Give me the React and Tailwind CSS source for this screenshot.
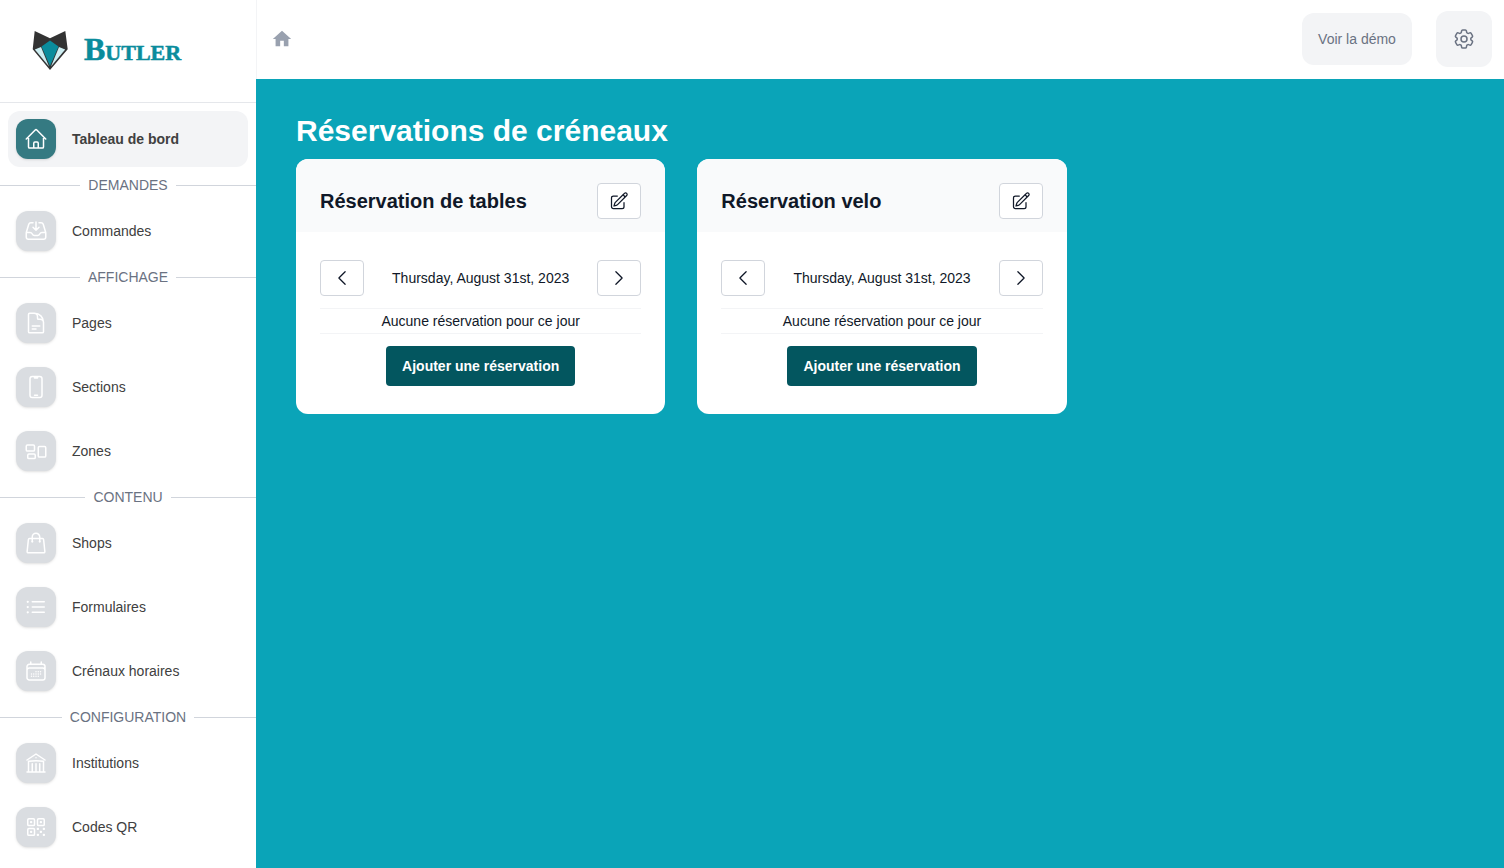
import { MdHome } from "react-icons/md";
import {
  HiOutlineHome,
  HiOutlineInboxArrowDown,
  HiOutlineDocumentText,
  HiOutlineDevicePhoneMobile,
  HiOutlineRectangleGroup,
  HiOutlineShoppingBag,
  HiOutlineListBullet,
  HiOutlineCalendarDays,
  HiOutlineBuildingLibrary,
  HiOutlineQrCode,
  HiOutlinePencilSquare,
  HiOutlineChevronLeft,
  HiOutlineChevronRight,
  HiOutlineCog6Tooth,
} from "react-icons/hi2";

const sections = [
  { label: "DEMANDES", items: [{ name: "Commandes", icon: HiOutlineInboxArrowDown }] },
  {
    label: "AFFICHAGE",
    items: [
      { name: "Pages", icon: HiOutlineDocumentText },
      { name: "Sections", icon: HiOutlineDevicePhoneMobile },
      { name: "Zones", icon: HiOutlineRectangleGroup },
    ],
  },
  {
    label: "CONTENU",
    items: [
      { name: "Shops", icon: HiOutlineShoppingBag },
      { name: "Formulaires", icon: HiOutlineListBullet },
      { name: "Crénaux horaires", icon: HiOutlineCalendarDays },
    ],
  },
  {
    label: "CONFIGURATION",
    items: [
      { name: "Institutions", icon: HiOutlineBuildingLibrary },
      { name: "Codes QR", icon: HiOutlineQrCode },
    ],
  },
];

const cards = ["Réservation de tables", "Réservation velo"];

function FoxLogo() {
  return (
    <svg width="42" height="44" viewBox="30 29 42 44">
      <path d="M34.7 31 L50 38.3 L65.3 31 L67.7 49.3 L50 70 L32.7 49.3 Z" fill="#333333" />
      <path d="M50 40.5 L58.5 46.5 L50 66 L41.5 46.5 Z" fill="#0a8c9c" />
      <path d="M34.8 49.6 L41 47 L49 66.5 Z" fill="#cdeef2" />
      <path d="M65.2 49.6 L59 47 L51 66.5 Z" fill="#cdeef2" />
    </svg>
  );
}

function SectionLabel({ label }) {
  return (
    <div className="flex h-9 items-center">
      <div className="h-px flex-1 bg-gray-300" />
      <span className="mx-2 text-sm text-gray-500">{label}</span>
      <div className="h-px flex-1 bg-gray-300" />
    </div>
  );
}

function NavItem({ name, icon: Icon }) {
  return (
    <div className="flex h-14 items-center gap-4 px-2">
      <div className="flex h-10 w-10 items-center justify-center rounded-xl bg-[#dadde1] text-white shadow-sm">
        <Icon className="h-6 w-6" />
      </div>
      <span className="text-sm text-neutral-700">{name}</span>
    </div>
  );
}

function ReservationCard({ title }) {
  return (
    <div className="w-[369.33px] overflow-hidden rounded-xl bg-white">
      <div className="flex items-center justify-between bg-gray-50 px-6 pt-6 pb-[13px]">
        <h2 className="text-xl font-bold text-gray-900">{title}</h2>
        <button className="flex h-9 w-11 items-center justify-center rounded border border-gray-300 bg-white text-gray-900">
          <HiOutlinePencilSquare className="h-5 w-5" />
        </button>
      </div>
      <div className="px-6 pt-7 pb-7">
        <div className="flex items-center justify-between">
          <button className="flex h-9 w-11 items-center justify-center rounded border border-gray-300 bg-white text-gray-900">
            <HiOutlineChevronLeft className="h-5 w-5" />
          </button>
          <span className="text-sm text-gray-900">Thursday, August 31st, 2023</span>
          <button className="flex h-9 w-11 items-center justify-center rounded border border-gray-300 bg-white text-gray-900">
            <HiOutlineChevronRight className="h-5 w-5" />
          </button>
        </div>
        <div className="mt-3 flex h-[26px] items-center justify-center border-y border-gray-100 text-sm text-gray-900">
          Aucune réservation pour ce jour
        </div>
        <div className="mt-3 flex justify-center">
          <button className="h-10 rounded bg-[#03565f] px-4 text-sm font-bold text-white">
            Ajouter une réservation
          </button>
        </div>
      </div>
    </div>
  );
}

export default function App() {
  return (
    <div className="flex h-screen overflow-hidden bg-white font-['Liberation_Sans',sans-serif]">
      <aside className="w-64 shrink-0">
        <div className="flex h-[103px] items-center gap-3 border-b border-gray-200 pl-[30px]">
          <FoxLogo />
          <span className="-mt-1 font-['Liberation_Serif',serif] text-[32px] font-bold text-[#0a8c9c] [-webkit-text-stroke:0.5px_#0a8c9c] [font-variant:small-caps]">
            Butler
          </span>
        </div>
        <div className="mx-2 mt-2 flex h-14 items-center gap-4 rounded-xl bg-gray-100 px-2">
          <div className="flex h-10 w-10 items-center justify-center rounded-xl bg-[#357a82] text-white shadow-sm">
            <HiOutlineHome className="h-6 w-6" />
          </div>
          <span className="text-sm font-bold text-neutral-700">Tableau de bord</span>
        </div>
        {sections.map((section) => (
          <div key={section.label}>
            <SectionLabel label={section.label} />
            <div className="flex flex-col gap-2 px-2">
              {section.items.map((item) => (
                <NavItem key={item.name} name={item.name} icon={item.icon} />
              ))}
            </div>
          </div>
        ))}
      </aside>

      <div className="flex min-w-0 flex-1 flex-col">
        <header className="flex h-[79px] items-center justify-between border-l border-gray-100 bg-white pr-3 pb-[2px] pl-[14px]">
          <MdHome className="mt-[1px] h-[22px] w-[22px] text-gray-400" />
          <div className="flex items-center gap-6">
            <button className="h-[52px] w-[110px] rounded-xl bg-gray-100 text-sm text-gray-500">
              Voir la démo
            </button>
            <button className="flex h-14 w-14 items-center justify-center rounded-xl bg-gray-100 text-gray-500">
              <HiOutlineCog6Tooth className="h-6 w-6" />
            </button>
          </div>
        </header>
        <main className="flex-1 bg-[#0aa4b8] px-10 pt-[34px]">
          <h1 className="text-3xl font-bold leading-9 text-white">Réservations de créneaux</h1>
          <div className="mt-[10px] flex gap-8">
            {cards.map((title) => (
              <ReservationCard key={title} title={title} />
            ))}
          </div>
        </main>
      </div>
    </div>
  );
}
